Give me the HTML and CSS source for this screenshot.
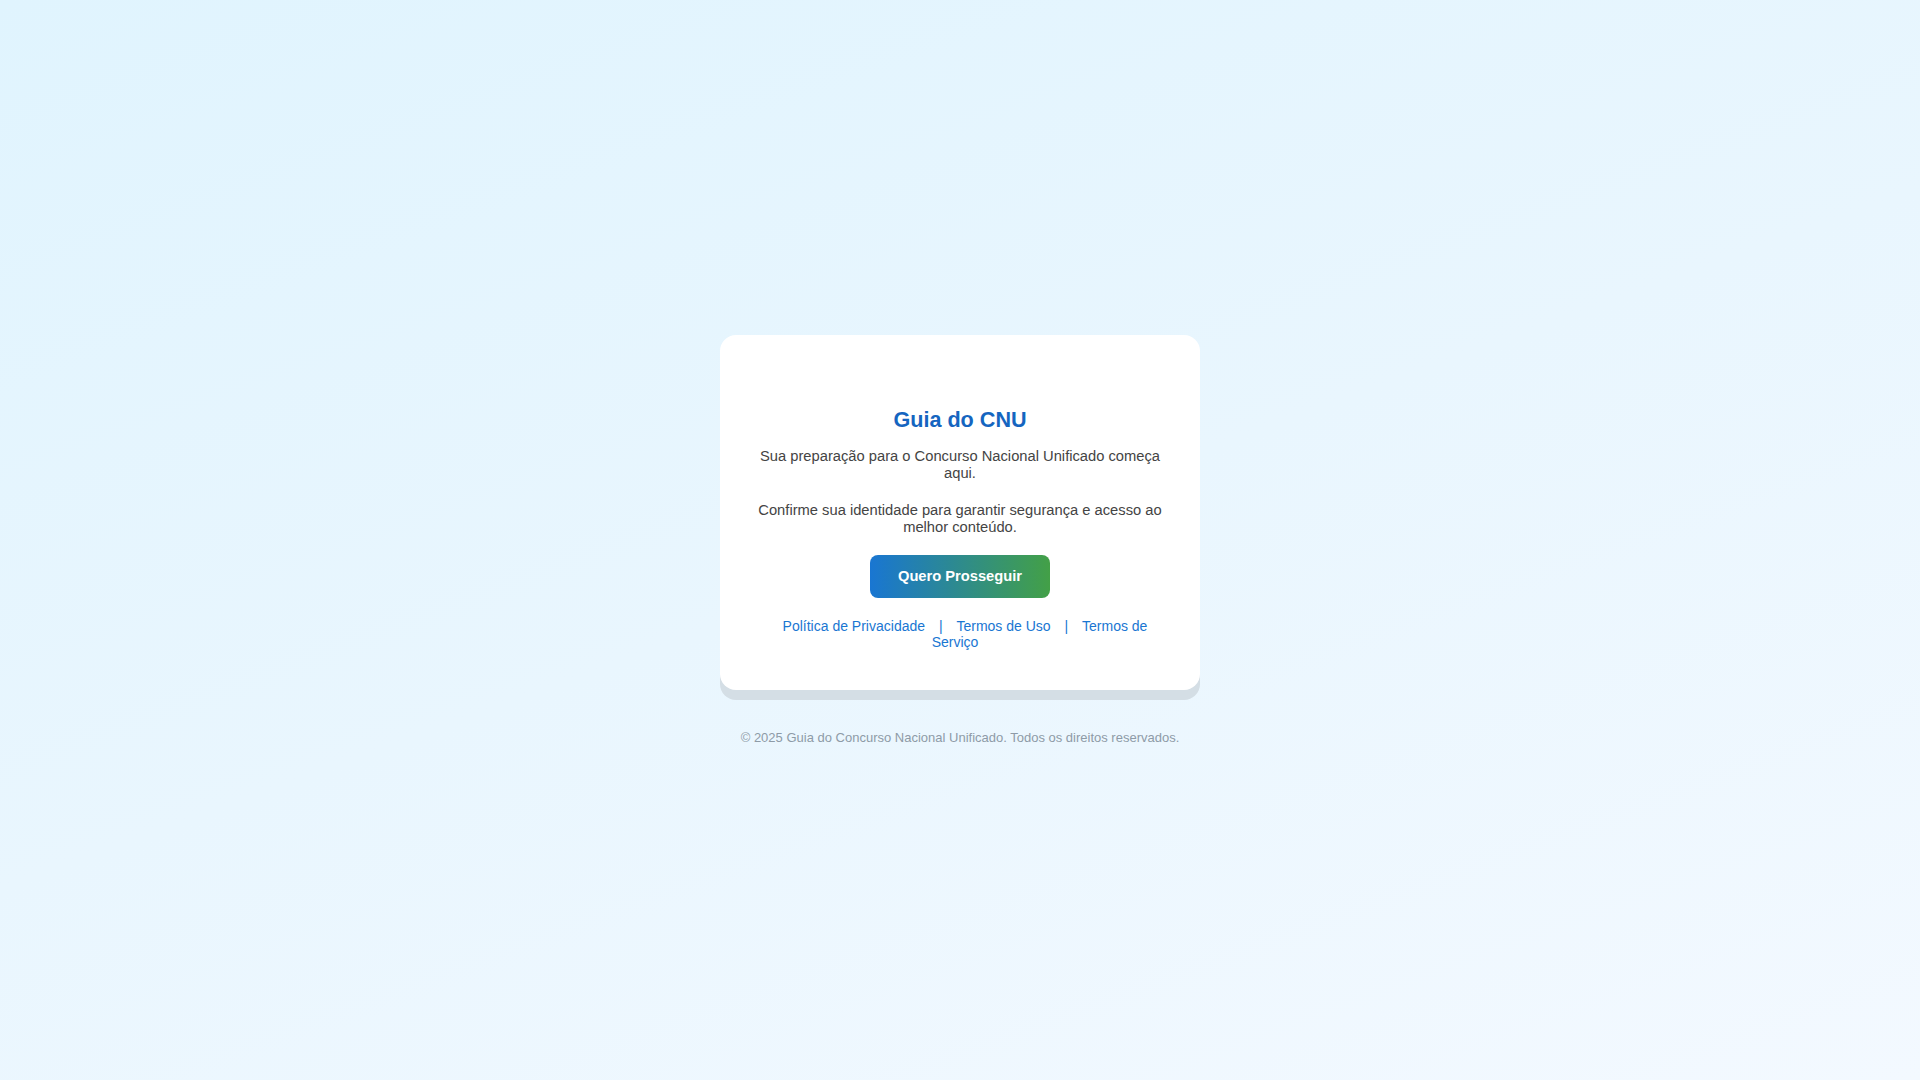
FILE: index.html
```html
<!DOCTYPE html>
<html lang="pt-BR">
<head>
<meta charset="utf-8">
<title>Guia do CNU</title>
<link rel="stylesheet" href="styles.css">
</head>
<body>
<main class="page">
  <section class="card">
    <div class="logo-slot"></div>
    <h1 class="title">Guia do CNU</h1>
    <p class="text">Sua preparação para o Concurso Nacional Unificado começa aqui.</p>
    <p class="text last">Confirme sua identidade para garantir segurança e acesso ao melhor conteúdo.</p>
    <button class="btn" type="button">Quero Prosseguir</button>
    <nav class="links"><a href="#">Política de Privacidade</a> <span class="sep">|</span> <a href="#">Termos de Uso</a> <span class="sep">|</span> <a href="#">Termos de Serviço</a></nav>
  </section>
  <footer class="footer">© 2025 Guia do Concurso Nacional Unificado. Todos os direitos reservados.</footer>
</main>
</body>
</html>
```
FILE: styles.css
```css
* { box-sizing: border-box; }
html, body { margin: 0; padding: 0; }
body {
  font-family: "Liberation Sans", Arial, sans-serif;
  background: linear-gradient(160deg, #e0f4fe 0%, #e9f6fe 50%, #f3f9ff 100%);
  min-height: 100vh;
}
.page {
  min-height: 100vh;
  display: flex;
  flex-direction: column;
  align-items: center;
  justify-content: center;
}
.card {
  width: 480px;
  background: #ffffff;
  border-radius: 16px;
  padding: 40px 38px 40px;
  text-align: center;
  box-shadow: 0 10px 0 #d4dee5;
}
.logo-slot { height: 32px; }
.title {
  margin: 0 0 16px;
  font-size: 21.6px;
  line-height: 25px;
  font-weight: 700;
  color: #1565c0;
}
.text {
  margin: 0 0 20px;
  font-size: 14.72px;
  line-height: 17px;
  color: #444444;
}
.text.last { margin-bottom: 19px; }
.btn {
  display: inline-block;
  border: 0;
  border-radius: 8px;
  padding: 13px 28px;
  font-family: "Liberation Sans", Arial, sans-serif;
  font-size: 14.7px;
  line-height: 17px;
  font-weight: 700;
  color: #ffffff;
  background: linear-gradient(90deg, #1976d2 0%, #43a047 100%);
  cursor: pointer;
}
.links {
  margin-top: 20px;
  font-size: 14px;
  line-height: 16px;
  color: #1976d2;
}
.links a { color: #1976d2; text-decoration: none; margin: 0 10px; }
.sep { color: #1976d2; }
.footer {
  margin-top: 40px;
  font-size: 13px;
  line-height: 15px;
  color: #8e9ba7;
}
```
